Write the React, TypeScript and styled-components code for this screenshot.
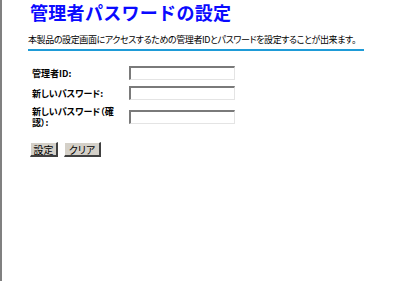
import React from "react";
import styled, { createGlobalStyle } from "styled-components";

const GlobalStyle = createGlobalStyle`
  html, body {
    margin: 0;
    padding: 0;
    background: #ffffff;
  }
`;

const Frame = styled.div`
  box-sizing: border-box;
  height: 281px;
  border-left: 2px solid #808080;
  padding: 1px 0 0 26px;
  font-family: "Noto Sans CJK JP", "Liberation Sans", sans-serif;
  color: #000000;
`;

const Title = styled.h1`
  margin: 0;
  padding: 0 0 0 2px;
  font-size: 18px;
  line-height: 22px;
  font-weight: bold;
  color: #0a0aff;
  letter-spacing: 0.3px;
`;

const Lead = styled.p`
  margin: 11px 0 0;
  width: 336px;
  padding-bottom: 3px;
  border-bottom: 2px solid #1e9bd7;
  font-size: 9px;
  line-height: 12px;
  letter-spacing: -0.4px;
  font-feature-settings: "palt";
  white-space: nowrap;
`;

const Form = styled.div`
  display: grid;
  grid-template-columns: 97px 106px;
  row-gap: 6px;
  align-items: center;
  margin-top: 15px;
  padding-left: 4px;
`;

const Label = styled.label`
  font-size: 9px;
  line-height: 11px;
  font-weight: bold;
  font-feature-settings: "palt";
  white-space: nowrap;
`;

const Field = styled.input`
  box-sizing: border-box;
  width: 106px;
  height: 14px;
  margin: 0;
  padding: 0 2px;
  background: #ffffff;
  border-top: 2px solid #7a7a7a;
  border-left: 2px solid #7a7a7a;
  border-right: 1px solid #e4e4e4;
  border-bottom: 1px solid #e4e4e4;
  font-size: 9px;
  outline: none;
`;

const Buttons = styled.div`
  display: flex;
  gap: 6px;
  margin-top: 14px;
  padding-left: 2px;
`;

const Button = styled.button<{ $w: number }>`
  box-sizing: border-box;
  width: ${(p) => p.$w}px;
  height: 15px;
  margin: 0;
  padding: 0;
  background: #d4d0c8;
  border-top: 1px solid #ffffff;
  border-left: 1px solid #ffffff;
  border-right: 2px solid #404040;
  border-bottom: 2px solid #404040;
  font-family: "Noto Sans CJK JP", "Liberation Sans", sans-serif;
  font-size: 10px;
  line-height: 11px;
  color: #000000;
  font-feature-settings: "palt";
`;

const App: React.FC = () => {
  return (
    <Frame>
      <GlobalStyle />
      <Title>管理者パスワードの設定</Title>
      <Lead>
        本製品の設定画面にアクセスするための管理者IDとパスワードを設定することが出来ます。
      </Lead>
      <Form>
        <Label>管理者ID:</Label>
        <Field type="text" />
        <Label>新しいパスワード:</Label>
        <Field type="password" />
        <Label>
          新しいパスワード（確
          <br />
          認）:
        </Label>
        <Field type="password" />
      </Form>
      <Buttons>
        <Button $w={28}>設定</Button>
        <Button $w={37}>クリア</Button>
      </Buttons>
    </Frame>
  );
};

export default App;
